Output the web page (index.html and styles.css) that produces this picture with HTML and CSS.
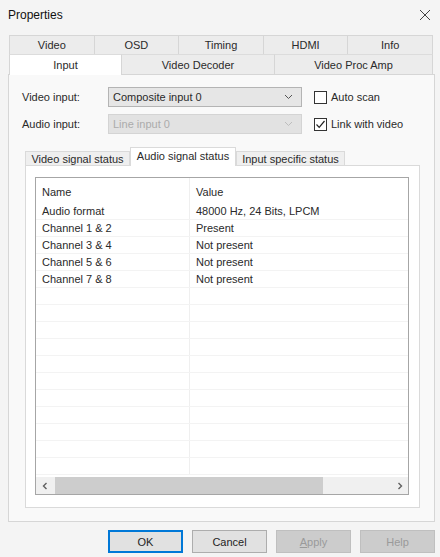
FILE: index.html
```html
<!DOCTYPE html>
<html lang="en">
<head>
    <meta charset="UTF-8">
    <meta name="viewport" content="width=device-width, initial-scale=1.0">
    <title>Properties</title>
    <link rel="stylesheet" href="styles.css">
</head>
<body>
    <div class="titlebar">
        <span class="title">Properties</span>
        <svg class="close" width="12" height="12" viewBox="0 0 12 12"><path d="M1 1L11 11M11 1L1 11" stroke="#444" stroke-width="1" fill="none"/></svg>
    </div>

    <div class="sheet">
        <div class="tabrow row-top">
            <div class="tab">Video</div>
            <div class="tab">OSD</div>
            <div class="tab">Timing</div>
            <div class="tab">HDMI</div>
            <div class="tab">Info</div>
        </div>
        <div class="tabrow row-bottom">
            <div class="tab active tab-input">Input</div>
            <div class="tab tab-decoder">Video Decoder</div>
            <div class="tab tab-procamp">Video Proc Amp</div>
        </div>

        <div class="panel">
            <div class="field">
                <span class="label">Video input:</span>
                <div class="combo">
                    <span>Composite input 0</span>
                    <svg width="9" height="6" viewBox="0 0 9 6"><path d="M1 1L4.5 4.5L8 1" stroke="#555" stroke-width="1" fill="none"/></svg>
                </div>
                <div class="check"><span class="box"></span>Auto scan</div>
            </div>
            <div class="field field-second">
                <span class="label">Audio input:</span>
                <div class="combo disabled">
                    <span>Line input 0</span>
                    <svg width="9" height="6" viewBox="0 0 9 6"><path d="M1 1L4.5 4.5L8 1" stroke="#bdbdbd" stroke-width="1" fill="none"/></svg>
                </div>
                <div class="check">
                    <span class="box"><svg width="11" height="11" viewBox="0 0 11 11"><path d="M1.5 5.5L4.2 8.3L9.5 2" stroke="#222" stroke-width="1.2" fill="none"/></svg></span>Link with video
                </div>
            </div>

            <div class="subtabs">
                <div class="subtab sub-video">Video signal status</div>
                <div class="subtab sub-audio active">Audio signal status</div>
                <div class="subtab sub-input">Input specific status</div>
            </div>
            <div class="subpanel">
                <div class="list">
                    <div class="list-head">
                        <div class="cell col-name">Name</div>
                        <div class="cell">Value</div>
                    </div>
                    <div class="list-body">
                        <div class="row"><div class="cell col-name">Audio format</div><div class="cell">48000 Hz, 24 Bits, LPCM</div></div>
                        <div class="row"><div class="cell col-name">Channel 1 &amp; 2</div><div class="cell">Present</div></div>
                        <div class="row"><div class="cell col-name">Channel 3 &amp; 4</div><div class="cell">Not present</div></div>
                        <div class="row"><div class="cell col-name">Channel 5 &amp; 6</div><div class="cell">Not present</div></div>
                        <div class="row"><div class="cell col-name">Channel 7 &amp; 8</div><div class="cell">Not present</div></div>
                        <div class="row"><div class="cell col-name"></div><div class="cell"></div></div>
                        <div class="row"><div class="cell col-name"></div><div class="cell"></div></div>
                        <div class="row"><div class="cell col-name"></div><div class="cell"></div></div>
                        <div class="row"><div class="cell col-name"></div><div class="cell"></div></div>
                        <div class="row"><div class="cell col-name"></div><div class="cell"></div></div>
                        <div class="row"><div class="cell col-name"></div><div class="cell"></div></div>
                        <div class="row"><div class="cell col-name"></div><div class="cell"></div></div>
                        <div class="row"><div class="cell col-name"></div><div class="cell"></div></div>
                        <div class="row"><div class="cell col-name"></div><div class="cell"></div></div>
                        <div class="row"><div class="cell col-name"></div><div class="cell"></div></div>
                        <div class="row"><div class="cell col-name"></div><div class="cell"></div></div>
                    </div>
                    <div class="hscroll">
                        <div class="arrow"><svg width="6" height="8" viewBox="0 0 6 8"><path d="M4.5 1L1.5 4L4.5 7" stroke="#606060" stroke-width="1.4" fill="none"/></svg></div>
                        <div class="thumb"></div>
                        <div class="track"></div>
                        <div class="arrow"><svg width="6" height="8" viewBox="0 0 6 8"><path d="M1.5 1L4.5 4L1.5 7" stroke="#606060" stroke-width="1.4" fill="none"/></svg></div>
                    </div>
                </div>
            </div>
        </div>

        <div class="buttons">
            <button class="btn default">OK</button>
            <button class="btn">Cancel</button>
            <button class="btn disabled"><u>A</u>pply</button>
            <button class="btn disabled">Help</button>
        </div>
    </div>
</body>
</html>
```

FILE: styles.css
```css
body {
    margin: 0;
    width: 440px;
    height: 557px;
    overflow: hidden;
    background-color: #f4f4f4;
    font-family: "Liberation Sans", Arial, sans-serif;
    font-size: 11px;
    color: #2a2a2a;
}
.titlebar {
    height: 30px;
    display: flex;
    align-items: center;
    justify-content: space-between;
    padding: 0 9px 0 8px;
}
.title {
    font-size: 12px;
    color: #111;
}
.sheet {
    margin-top: 5px;
    padding: 0 5px 0 8px;
}
.tabrow {
    display: flex;
    padding: 0 2px;
}
.row-top {
    height: 19px;
}
.row-bottom {
    height: 20px;
}
.tab {
    flex: 1;
    display: flex;
    align-items: center;
    justify-content: center;
    background-color: #ececec;
    border: 1px solid #d6d6d6;
    border-bottom: none;
    margin-left: -1px;
    box-sizing: border-box;
}
.row-bottom .tab {
    border-top: 1px solid #dcdcdc;
}
.tab-input {
    flex: 0 0 113px;
}
.tab-decoder {
    flex: 0 0 154px;
}
.tab-procamp {
    flex: 1;
}
.tab.active {
    background-color: #fff;
    position: relative;
    z-index: 1;
    margin-bottom: -1px;
    height: 21px;
}
.panel {
    height: 448px;
    box-sizing: border-box;
    border: 1px solid #d6d6d6;
    background-color: #f9f9f9;
    padding: 12px 14px 0 13px;
}
.field {
    display: flex;
    align-items: center;
    height: 20px;
}
.field-second {
    margin-top: 7px;
}
.label {
    width: 86px;
}
.combo {
    width: 194px;
    height: 20px;
    box-sizing: border-box;
    border: 1px solid #b4b4b4;
    background-color: #e6e6e6;
    display: flex;
    align-items: center;
    justify-content: space-between;
    padding: 0 8px 0 4px;
}
.combo.disabled {
    border-color: #d4d4d4;
    background-color: #e2e2e2;
    color: #ababab;
}
.check {
    display: flex;
    align-items: center;
    margin-left: 12px;
}
.box {
    width: 13px;
    height: 13px;
    box-sizing: border-box;
    border: 1px solid #333;
    background-color: #fff;
    margin-right: 4px;
    display: flex;
    align-items: center;
    justify-content: center;
}
.subtabs {
    display: flex;
    align-items: flex-end;
    height: 18px;
    margin: 13px 0 0 3px;
}
.subtab {
    height: 14px;
    box-sizing: border-box;
    border: 1px solid #dadada;
    border-bottom: none;
    background-color: #efefef;
    display: flex;
    align-items: center;
    justify-content: center;
}
.sub-video {
    width: 105px;
}
.sub-audio {
    width: 106px;
}
.sub-input {
    width: 109px;
}
.subtab.active {
    height: 19px;
    margin-bottom: -1px;
    background-color: #fff;
    position: relative;
    z-index: 1;
    padding-bottom: 3px;
}
.subpanel {
    width: 395px;
    height: 343px;
    box-sizing: border-box;
    margin-left: 3px;
    border: 1px solid #dadada;
    background-color: #fff;
    padding: 11px 0 0 9px;
}
.list {
    width: 374px;
    height: 318px;
    box-sizing: border-box;
    border: 1px solid #a6a6a6;
    background-color: #fff;
    display: flex;
    flex-direction: column;
}
.list-head {
    height: 25px;
    display: flex;
}
.list-head .cell {
    align-items: flex-start;
    padding-top: 8px;
}
.list-body {
    flex: 1;
    overflow: hidden;
}
.row {
    height: 17px;
    box-sizing: border-box;
    border-bottom: 1px solid #f3f3f3;
    display: flex;
}
.cell {
    padding-left: 6px;
    display: flex;
    align-items: center;
    white-space: nowrap;
}
.col-name {
    width: 154px;
    box-sizing: border-box;
    border-right: 1px solid #efefef;
}
.hscroll {
    height: 17px;
    display: flex;
    background-color: #f0f0f0;
}
.arrow {
    width: 17px;
    display: flex;
    align-items: center;
    justify-content: center;
}
.thumb {
    width: 268px;
    margin-left: 2px;
    background-color: #cdcdcd;
}
.track {
    flex: 1;
}
.buttons {
    display: flex;
    justify-content: flex-end;
    gap: 9px;
    margin-top: 8px;
}
.btn {
    width: 75px;
    height: 23px;
    box-sizing: border-box;
    border: 1px solid #adadad;
    background-color: #e1e1e1;
    font-family: "Liberation Sans", Arial, sans-serif;
    font-size: 11px;
    color: #1e1e1e;
    padding: 0;
}
.btn.default {
    border-color: #0078d7;
    box-shadow: inset 0 0 0 1px #0078d7;
}
.btn.disabled {
    background-color: #cccccc;
    border-color: #bfbfbf;
    color: #9a9a9a;
}
```
